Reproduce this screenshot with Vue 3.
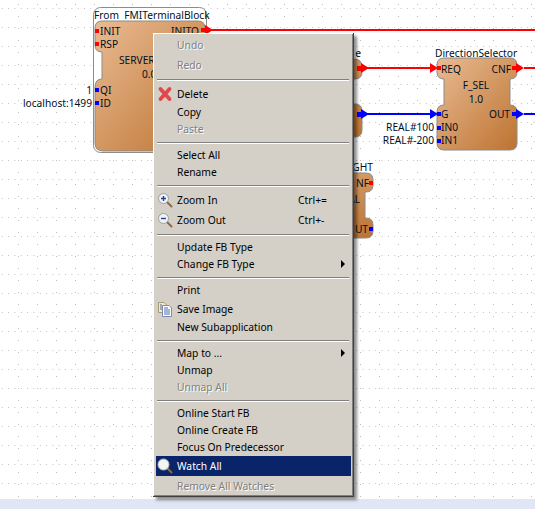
<script setup>
const menu = [
  { t: 'Undo', d: 1, h: 't' },
  { t: 'Redo', d: 1, h: 't' },
  { s: 1 },
  { t: 'Delete', h: 't', i: 'del' },
  { t: 'Copy' },
  { t: 'Paste', d: 1 },
  { s: 1 },
  { t: 'Select All' },
  { t: 'Rename' },
  { s: 1 },
  { t: 'Zoom In', h: 't', i: 'plus', k: 'Ctrl+=' },
  { t: 'Zoom Out', h: 't', i: 'minus', k: 'Ctrl+-' },
  { s: 1 },
  { t: 'Update FB Type' },
  { t: 'Change FB Type', a: 1 },
  { s: 1 },
  { t: 'Print' },
  { t: 'Save Image', h: 't', i: 'doc' },
  { t: 'New Subapplication' },
  { s: 1 },
  { t: 'Map to ...', a: 1 },
  { t: 'Unmap' },
  { t: 'Unmap All', d: 1 },
  { s: 1 },
  { t: 'Online Start FB' },
  { t: 'Online Create FB' },
  { t: 'Focus On Predecessor' },
  { t: 'Watch All', h: 't', i: 'watch', on: 1 },
  { t: 'Remove All Watches', d: 1, h: 't' }
]

const blocks = [
  // blocks mostly hidden behind the menu come first
  'M170 59H354Q362 59 362 67V72Q362 79 355 79H350V104H355Q362 104 362 111V130Q362 137 355 137H170Z',
  'M170 173H366Q373 173 373 180V185Q373 192 366 192H365V218H366Q373 218 373 225V231Q373 238 366 238H170Z',
  'M102 21H198Q205 21 205 28V143Q205 151 197 151H103Q95 151 95 143V87Q95 79 102 79V52Q95 52 95 45V28Q95 21 102 21Z',
  'M444 58H510Q517 58 517 65V72Q517 79 510 79V105Q517 105 517 112V143Q517 150 510 150H444Q437 150 437 143V112Q437 105 444 105V79Q437 79 437 72V65Q437 58 444 58Z'
]

const labels = [
  { x: 94, y: 19, t: 'From\u00a0\u00a0FMITerminalBlock' },
  { x: 100, y: 35, t: 'INIT' },
  { x: 100, y: 48, t: 'RSP' },
  { x: 119, y: 64, t: 'SERVER_1_0' },
  { x: 142, y: 78, t: '0.0' },
  { x: 100, y: 94, t: 'QI' },
  { x: 100, y: 107, t: 'ID' },
  { x: 171, y: 35, t: 'INITO' },
  { x: 92, y: 94, t: '1', e: 1 },
  { x: 92, y: 107, t: 'localhost:1499', e: 1 },
  { x: 361, y: 57, t: 'e', e: 1 },
  { x: 373, y: 171, t: 'GHT', e: 1 },
  { x: 369, y: 187, t: 'NF', e: 1 },
  { x: 360, y: 203, t: 'AL', e: 1 },
  { x: 368, y: 233, t: 'UT', e: 1 },
  { x: 435, y: 57, t: 'DirectionSelector' },
  { x: 441, y: 73, t: 'REQ' },
  { x: 511, y: 73, t: 'CNF', e: 1 },
  { x: 476, y: 89, t: 'F_SEL', m: 1 },
  { x: 476, y: 103, t: '1.0', m: 1 },
  { x: 441, y: 118, t: 'G' },
  { x: 510, y: 118, t: 'OUT', e: 1 },
  { x: 441, y: 131, t: 'IN0' },
  { x: 441, y: 144, t: 'IN1' },
  { x: 434, y: 131, t: 'REAL#100', e: 1 },
  { x: 434, y: 144, t: 'REAL#-200', e: 1 }
]

const anchor = (l) => (l.e ? 'end' : l.m ? 'middle' : 'start')

const ports = [
  { x: 95, y: 29, c: 'r' }, { x: 95, y: 42, c: 'r' },
  { x: 95, y: 88, c: 'b' }, { x: 95, y: 101, c: 'b' },
  { x: 201, y: 28, c: 'r' },
  { x: 369, y: 181, c: 'r' }, { x: 369, y: 227, c: 'b' },
  { x: 437, y: 66, c: 'r' }, { x: 437, y: 112, c: 'b' },
  { x: 437, y: 126, c: 'b' }, { x: 437, y: 139, c: 'b' },
  { x: 512, y: 66, c: 'r' }, { x: 512, y: 112, c: 'b' }
]

// x is the triangle's base, y the wire's centre
const arrows = [
  { x: 205, y: 30, c: 'r' },
  { x: 361, y: 68, c: 'r' }, { x: 361, y: 114, c: 'b' },
  { x: 430, y: 68, c: 'r' }, { x: 430, y: 114, c: 'b' },
  { x: 516, y: 68, c: 'r' }, { x: 516, y: 114, c: 'b' }
]
const arrowPath = (a) => `M${a.x} ${a.y - 5}L${a.x + 8} ${a.y}L${a.x} ${a.y + 5}Z`
</script>

<template>
  <div class="page">
    <div class="canvas">
      <svg class="diagram" width="535" height="499" viewBox="0 0 535 499">
        <defs>
          <pattern id="rows" width="6.33" height="19" patternUnits="userSpaceOnUse">
            <rect x="2" y="8" width="1" height="1" class="dot" />
          </pattern>
          <pattern id="cols" width="19" height="24" patternUnits="userSpaceOnUse">
            <rect x="18" y="16" width="1" height="1" class="dot" />
            <rect x="18" y="4" width="1" height="1" class="dot" />
          </pattern>
          <linearGradient id="fb" x1="0" y1="0" x2="1" y2="1">
            <stop offset="0" stop-color="#e9bb93" />
            <stop offset="1" stop-color="#bd7330" />
          </linearGradient>
        </defs>
        <rect width="535" height="499" fill="url(#rows)" />
        <rect width="535" height="499" fill="url(#cols)" />

        <rect x="93.5" y="7.5" width="113" height="145" rx="7" class="select" />

        <path class="wire-r" d="M206 30H535M361 68H430M524 68H535" />
        <path class="wire-b" d="M361 114H430M524 114H535" />

        <path v-for="(b, i) in blocks" :key="i" :d="b" class="fb" />

        <path v-for="(a, i) in arrows" :key="'a' + i" :d="arrowPath(a)" :class="a.c" />
        <rect v-for="(p, i) in ports" :key="'p' + i" :x="p.x" :y="p.y" width="4" height="4" :class="p.c" />
        <rect x="357" y="66" width="4" height="5" class="r" />
        <rect x="357" y="112" width="4" height="5" class="b" />

        <text v-for="(l, i) in labels" :key="'l' + i" :x="l.x" :y="l.y" :text-anchor="anchor(l)" class="lbl">{{ l.t }}</text>
      </svg>

      <div class="menu">
        <template v-for="(m, i) in menu" :key="i">
          <div v-if="m.s" class="sep"></div>
          <div v-else class="item" :class="{ tall: m.h, off: m.d, on: m.on }">
            <span class="ico">
              <svg v-if="m.i === 'del'" width="16" height="16" viewBox="0 0 16 16">
                <path d="M3.5 3L12.5 13M12.5 3L3.5 13" class="x" />
              </svg>
              <svg v-else-if="m.i === 'plus' || m.i === 'minus'" width="16" height="16" viewBox="0 0 16 16">
                <path d="M10 10L14.5 14.5" class="handle" />
                <circle cx="6.5" cy="6.5" r="5" class="lens" />
                <path :d="m.i === 'plus' ? 'M4 6.5H9M6.5 4V9' : 'M4 6.5H9'" class="sign" />
              </svg>
              <svg v-else-if="m.i === 'doc'" width="16" height="16" viewBox="0 0 16 16">
                <path d="M1.5 1.5H7L9 3.5V11.5H1.5Z" class="page-back" />
                <path d="M5.5 4.5H12L14.5 7V15.5H5.5Z" class="page-front" />
                <path d="M7 7H11M7 9H13M7 11H13M7 13H13" class="doc-lines" />
                <path d="M3 4H5M3 6H5M3 8H5" class="doc-lines" />
              </svg>
              <svg v-else-if="m.i === 'watch'" width="16" height="16" viewBox="0 0 16 16">
                <path d="M10 10L14.5 14.5" class="handle" />
                <circle cx="6.5" cy="6.5" r="5.5" class="glass" />
              </svg>
            </span>
            <span class="txt">{{ m.t }}</span>
            <span v-if="m.k" class="key">{{ m.k }}</span>
            <span v-if="m.a" class="arrow"></span>
          </div>
        </template>
      </div>
    </div>
    <div class="band"></div>
  </div>
</template>

<style scoped>
.page {
  width: 535px;
  height: 509px;
  display: flex;
  flex-direction: column;
  overflow: hidden;
  font-family: "Noto Sans", sans-serif;
}
.canvas {
  position: relative;
  height: 499px;
  background: #fff;
}
.band {
  height: 10px;
  background: #e0e6f6;
}
.diagram {
  display: block;
}
.dot { fill: #bdbdbd; shape-rendering: crispEdges; }
.select { fill: #fff; stroke: #8c8c8c; stroke-width: 1; }
.fb { fill: url(#fb); stroke: #8a8a8a; stroke-width: 1; }
.wire-r { fill: none; stroke: #ff0000; stroke-width: 2; }
.wire-b { fill: none; stroke: #0000ff; stroke-width: 2; }
.r { fill: #ff0000; }
.b { fill: #0000ff; }
.lbl {
  font-family: "Noto Sans", sans-serif;
  font-size: 10.2px;
  fill: #00101f;
}
.menu {
  position: absolute;
  left: 153px;
  top: 33px;
  width: 201px;
  height: 464px;
  box-sizing: border-box;
  padding: 2px 2px 1px 3px;
  display: flex;
  flex-direction: column;
  background: #d4d0c8;
  border-right: 1px solid #404040;
  border-bottom: 1px solid #404040;
  box-shadow: inset 1px 1px 0 #fff, inset -1px -1px 0 #808080, 3px 3px 3px rgba(0, 0, 0, 0.45);
}
.item {
  height: 17px;
  flex: none;
  box-sizing: border-box;
  padding-bottom: 2px;
  display: flex;
  align-items: center;
  font-size: 10.3px;
  color: #000;
}
.tall { height: 20px; padding-bottom: 0; }
.ico {
  width: 21px;
  height: 16px;
  flex: none;
  display: block;
  padding-left: 1px;
  box-sizing: border-box;
}
.txt { flex: none; }
.key {
  position: absolute;
  left: 145px;
}
.arrow {
  margin-left: auto;
  margin-right: 6px;
  width: 0;
  height: 0;
  border-left: 4px solid #000;
  border-top: 4px solid transparent;
  border-bottom: 4px solid transparent;
}
.off .txt {
  color: #808080;
  text-shadow: 1px 1px 0 #fff;
}
.on {
  background: #0a246a;
  color: #fff;
}
.sep {
  height: 9px;
  flex: none;
  position: relative;
  margin: 0 2px 0 1px;
}
.sep::after {
  content: "";
  position: absolute;
  left: 0;
  right: 0;
  top: 4px;
  height: 1px;
  background: #808080;
  box-shadow: 0 1px 0 #fff;
}
.x { fill: none; stroke: #e2474c; stroke-width: 3.8; stroke-linecap: round; }
.handle { fill: none; stroke: #8a6a4a; stroke-width: 2; stroke-linecap: round; }
.lens { fill: #f2f2f4; stroke: #9aa0a8; stroke-width: 1; }
.sign { fill: none; stroke: #2a3f9a; stroke-width: 1.4; }
.glass { fill: #f4f4f0; stroke: #b8bcc4; stroke-width: 1; }
.page-back { fill: #f4e9c4; stroke: #a89a70; stroke-width: 1; }
.page-front { fill: #fff; stroke: #7a8ab0; stroke-width: 1; }
.doc-lines { fill: none; stroke: #4a6ab0; stroke-width: 1; }
</style>

<style>
html, body { margin: 0; background: #fff; }
</style>
